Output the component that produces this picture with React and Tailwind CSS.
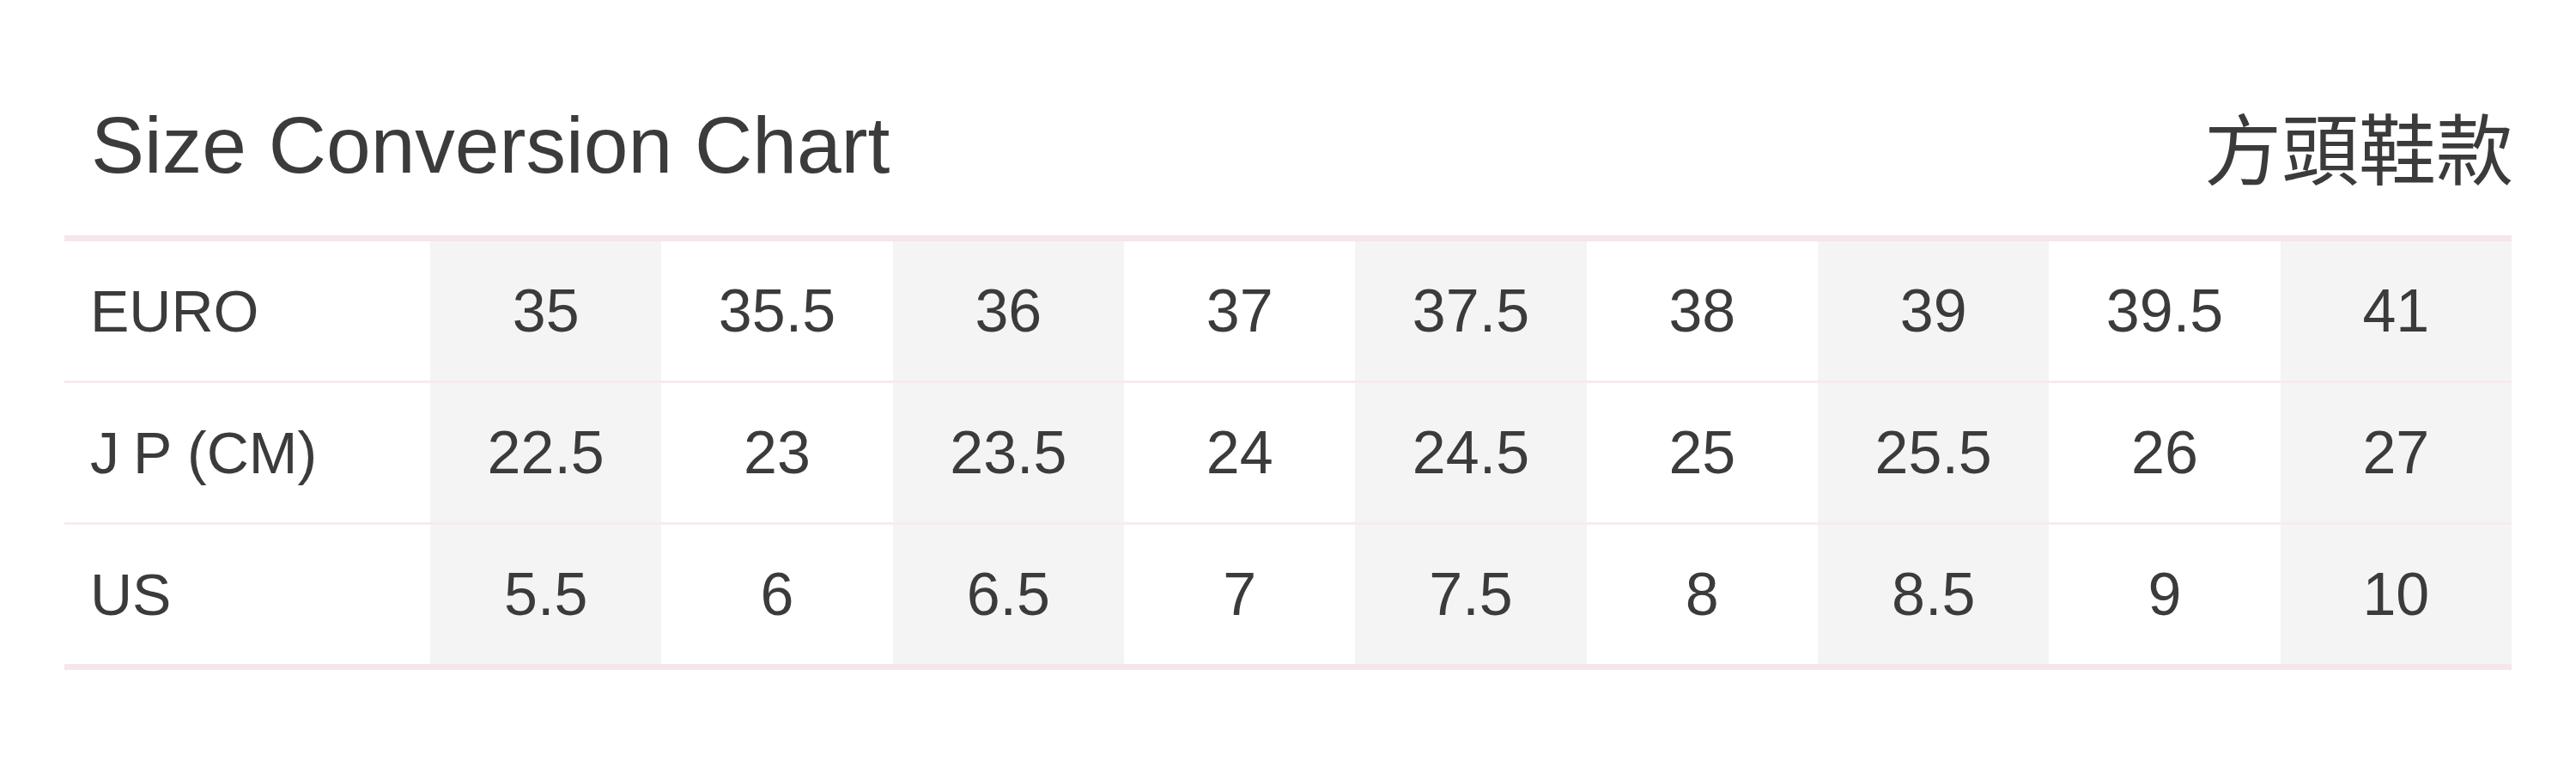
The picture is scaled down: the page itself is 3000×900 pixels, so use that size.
import React from "react";

const rows = [
  { label: "EURO", values: ["35", "35.5", "36", "37", "37.5", "38", "39", "39.5", "41"] },
  { label: "JP (CM)", values: ["22.5", "23", "23.5", "24", "24.5", "25", "25.5", "26", "27"] },
  { label: "US", values: ["5.5", "6", "6.5", "7", "7.5", "8", "8.5", "9", "10"] },
];

export default function App() {
  return (
    <div
      className="w-[3000px] h-[900px] bg-white text-[#3b3b3b] px-[75px]"
      style={{ fontFamily: '"Liberation Sans", Arial, sans-serif' }}
    >
      <div className="flex items-start justify-between pt-[123px]">
        <h1 className="pl-[31px] text-[93px] leading-[92px] font-normal">Size Conversion Chart</h1>
        <div
          className="text-[90px] leading-[92px] mr-[-2px]"
          style={{ fontFamily: '"Noto Sans CJK TC", "Noto Sans CJK SC", sans-serif' }}
        >
          方頭鞋款
        </div>
      </div>

      <div className="mt-[59px] w-[2850px] border-t-[7px] border-b-[7px] border-[#f5e6eb]">
        {rows.map((row, ri) => (
          <div
            key={row.label}
            className={
              "grid grid-cols-[426px_repeat(9,minmax(0,1fr))] h-[162px] " +
              (ri < rows.length - 1 ? "border-b-[3px] border-[#f7ebef] h-[165px]" : "")
            }
          >
            <div className="flex items-center pl-[30px] text-[68px] leading-[68px]">
              {row.label === "JP (CM)" ? (
                <span>
                  <span className="mr-[16px]">J</span>P (CM)
                </span>
              ) : (
                row.label
              )}
            </div>
            {row.values.map((v, i) => (
              <div
                key={i}
                className={
                  "flex items-center justify-center text-[70px] leading-[70px] " +
                  (i % 2 === 0 ? "bg-[#f4f4f4]" : "bg-white")
                }
              >
                {v}
              </div>
            ))}
          </div>
        ))}
      </div>
    </div>
  );
}
